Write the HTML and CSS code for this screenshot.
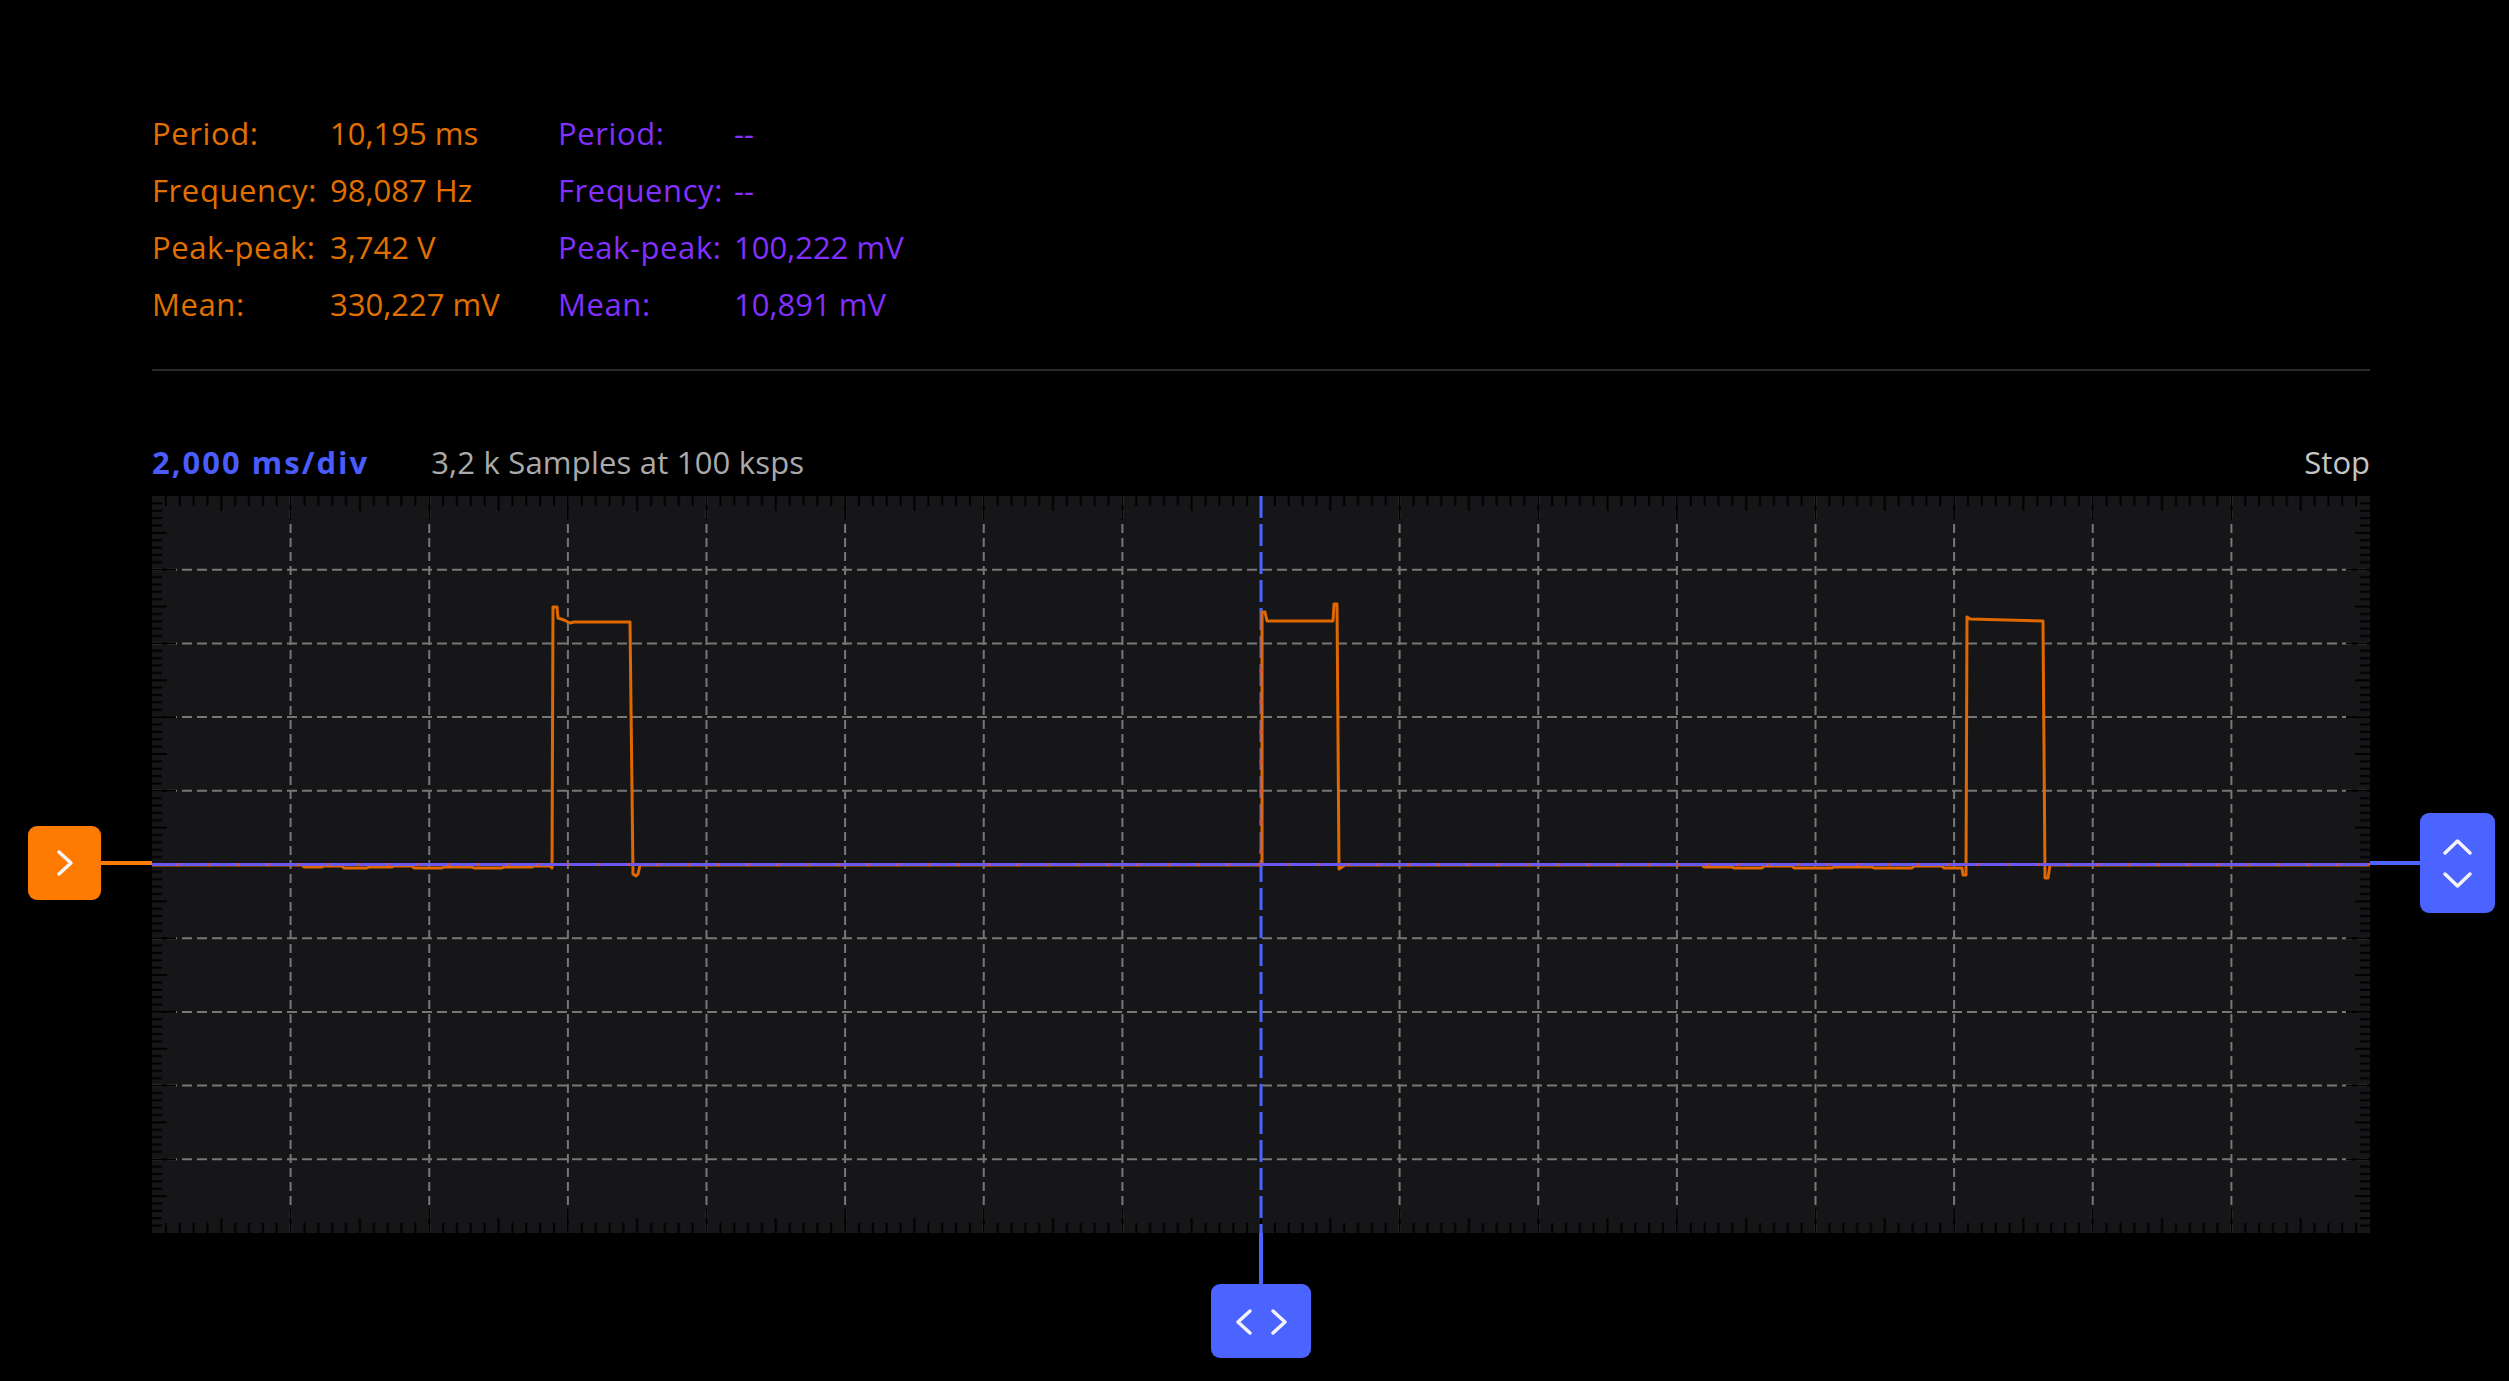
FILE: index.html
```html
<!DOCTYPE html>
<html lang="en">
<head>
<meta charset="utf-8">
<title>Scope</title>
<link rel="stylesheet" href="styles.css">
</head>
<body>
<div class="page">
  <div class="measures">
    <span class="lbl ch1">Period:</span><span class="ch1">10,195 ms</span><span class="lbl ch2">Period:</span><span class="ch2">--</span>
    <span class="lbl ch1">Frequency:</span><span class="ch1">98,087 Hz</span><span class="lbl ch2">Frequency:</span><span class="ch2">--</span>
    <span class="lbl ch1">Peak-peak:</span><span class="ch1">3,742 V</span><span class="lbl ch2">Peak-peak:</span><span class="ch2">100,222 mV</span>
    <span class="lbl ch1">Mean:</span><span class="ch1">330,227 mV</span><span class="lbl ch2">Mean:</span><span class="ch2">10,891 mV</span>
  </div>
  <div class="sep"></div>
  <div class="header">
    <div class="header-left">
      <span class="timediv">2,000 ms/div</span>
      <span class="samples">3,2 k Samples at 100 ksps</span>
    </div>
    <span class="state">Stop</span>
  </div>
  <div class="scope">
    <svg class="plot" width="2218" height="737" viewBox="0 0 2218 737">
      <defs>
        <pattern id="tt" patternUnits="userSpaceOnUse" x="-1" y="0" width="138.625" height="30">
          <rect x="0" y="0" width="2" height="24"/>
          <rect x="13.86" y="0" width="2" height="10"/>
          <rect x="27.73" y="0" width="2" height="10"/>
          <rect x="41.59" y="0" width="2" height="10"/>
          <rect x="55.45" y="0" width="2" height="10"/>
          <rect x="69.31" y="0" width="2" height="15"/>
          <rect x="83.18" y="0" width="2" height="10"/>
          <rect x="97.04" y="0" width="2" height="10"/>
          <rect x="110.9" y="0" width="2" height="10"/>
          <rect x="124.76" y="0" width="2" height="10"/>
        </pattern>
        <pattern id="tb" patternUnits="userSpaceOnUse" x="-1" y="707" width="138.625" height="30">
          <rect x="0" y="6" width="2" height="24"/>
          <rect x="13.86" y="20" width="2" height="10"/>
          <rect x="27.73" y="20" width="2" height="10"/>
          <rect x="41.59" y="20" width="2" height="10"/>
          <rect x="55.45" y="20" width="2" height="10"/>
          <rect x="69.31" y="15" width="2" height="15"/>
          <rect x="83.18" y="20" width="2" height="10"/>
          <rect x="97.04" y="20" width="2" height="10"/>
          <rect x="110.9" y="20" width="2" height="10"/>
          <rect x="124.76" y="20" width="2" height="10"/>
        </pattern>
        <pattern id="tl" patternUnits="userSpaceOnUse" x="0" y="-1" width="30" height="73.7">
          <rect x="0" y="0" width="24" height="2"/>
          <rect x="0" y="7.37" width="10" height="2"/>
          <rect x="0" y="14.74" width="10" height="2"/>
          <rect x="0" y="22.11" width="10" height="2"/>
          <rect x="0" y="29.48" width="10" height="2"/>
          <rect x="0" y="36.85" width="15" height="2"/>
          <rect x="0" y="44.22" width="10" height="2"/>
          <rect x="0" y="51.59" width="10" height="2"/>
          <rect x="0" y="58.96" width="10" height="2"/>
          <rect x="0" y="66.33" width="10" height="2"/>
        </pattern>
        <pattern id="tr" patternUnits="userSpaceOnUse" x="2188" y="-1" width="30" height="73.7">
          <rect x="6" y="0" width="24" height="2"/>
          <rect x="20" y="7.37" width="10" height="2"/>
          <rect x="20" y="14.74" width="10" height="2"/>
          <rect x="20" y="22.11" width="10" height="2"/>
          <rect x="20" y="29.48" width="10" height="2"/>
          <rect x="15" y="36.85" width="15" height="2"/>
          <rect x="20" y="44.22" width="10" height="2"/>
          <rect x="20" y="51.59" width="10" height="2"/>
          <rect x="20" y="58.96" width="10" height="2"/>
          <rect x="20" y="66.33" width="10" height="2"/>
        </pattern>
      </defs>
      <rect class="plot-bg" x="0" y="0" width="2218" height="737"/>
      <g class="grid">
        <line x1="0" y1="73.7" x2="2218" y2="73.7"/>
        <line x1="0" y1="147.4" x2="2218" y2="147.4"/>
        <line x1="0" y1="221.1" x2="2218" y2="221.1"/>
        <line x1="0" y1="294.8" x2="2218" y2="294.8"/>
        <line x1="0" y1="442.2" x2="2218" y2="442.2"/>
        <line x1="0" y1="515.9" x2="2218" y2="515.9"/>
        <line x1="0" y1="589.6" x2="2218" y2="589.6"/>
        <line x1="0" y1="663.3" x2="2218" y2="663.3"/>
      </g>
      <g class="grid grid-v">
        <line x1="138.6" y1="0" x2="138.6" y2="737"/>
        <line x1="277.25" y1="0" x2="277.25" y2="737"/>
        <line x1="415.9" y1="0" x2="415.9" y2="737"/>
        <line x1="554.5" y1="0" x2="554.5" y2="737"/>
        <line x1="693.1" y1="0" x2="693.1" y2="737"/>
        <line x1="831.75" y1="0" x2="831.75" y2="737"/>
        <line x1="970.4" y1="0" x2="970.4" y2="737"/>
        <line x1="1247.6" y1="0" x2="1247.6" y2="737"/>
        <line x1="1386.25" y1="0" x2="1386.25" y2="737"/>
        <line x1="1524.9" y1="0" x2="1524.9" y2="737"/>
        <line x1="1663.5" y1="0" x2="1663.5" y2="737"/>
        <line x1="1802.1" y1="0" x2="1802.1" y2="737"/>
        <line x1="1940.75" y1="0" x2="1940.75" y2="737"/>
        <line x1="2079.4" y1="0" x2="2079.4" y2="737"/>
      </g>
      <g class="ticks">
        <rect x="3" y="0" width="2212" height="30" fill="url(#tt)"/>
        <rect x="3" y="707" width="2212" height="30" fill="url(#tb)"/>
        <rect x="0" y="3" width="30" height="731" fill="url(#tl)"/>
        <rect x="2188" y="3" width="30" height="731" fill="url(#tr)"/>
      </g>
      <line class="tpos" x1="1109" y1="0" x2="1109" y2="737"/>
      <path class="trace1" d="M0,369 H150 L152,371 L170,371 L172,370 L190,370 L192,372 L215,372 L217,371 L240,371 L242,370 L260,370 L262,372 L290,372 L292,371 L320,371 L322,372 L350,372 L352,371 L380,371 L382,370 L398,370 L400,372 L401,111 L405,111 L406,122 L412,124 L418,127 L422,126 L478,126 L481,378 L484,380 L486,378 L488,369 L1107,369 L1110,369 L1110,116 L1113,116 L1115,125 L1181,125 L1182,108 L1185,108 L1187,373 L1190,371 L1193,369 L1550,369 L1552,371 L1580,371 L1582,372 L1610,372 L1612,370 L1640,370 L1642,372 L1680,372 L1682,371 L1720,371 L1722,372 L1760,372 L1762,370 L1790,370 L1792,372 L1810,372 L1811,379 L1814,379 L1815,121 L1818,123 L1891,125 L1893,382 L1896,382 L1898,369 H2218"/>
      <line class="trace2" x1="0" y1="368.5" x2="2218" y2="368.5"/>
      <line class="trig" x1="25" y1="368.5" x2="2218" y2="368.5"/>
      <line class="trig" x1="1109" y1="174" x2="1109" y2="368"/>
    </svg>

    <div class="marker marker-ch1">
      <div class="handle handle-orange">
        <svg width="73" height="74" viewBox="0 0 73 74"><polyline class="chev" points="31,26 43,37 31,48"/></svg>
      </div>
      <div class="link link-h link-orange"></div>
    </div>

    <div class="marker marker-ch2">
      <div class="link link-h link-blue"></div>
      <div class="handle handle-blue handle-tall">
        <svg width="75" height="100" viewBox="0 0 75 100"><polyline class="chev" points="25,40 37.5,28 50,40"/><polyline class="chev" points="25,61 37.5,73 50,61"/></svg>
      </div>
    </div>

    <div class="marker marker-time">
      <div class="link link-v link-blue"></div>
      <div class="handle handle-blue handle-wide">
        <svg width="100" height="74" viewBox="0 0 100 74"><polyline class="chev" points="39,27 27,38 39,49"/><polyline class="chev" points="62,27 74,38 62,49"/></svg>
      </div>
    </div>
  </div>
</div>
</body>
</html>
```
FILE: styles.css
```css
html, body {
  margin: 0;
  padding: 0;
  background: #000;
}

body {
  font-family: "Open Sans", "Noto Sans", "DejaVu Sans", sans-serif;
  width: 2509px;
  height: 1381px;
  overflow: hidden;
}

.page {
  width: 2218px;
  padding: 105px 0 0 152px;
}

.measures {
  display: grid;
  grid-template-columns: 178px 228px 176px auto;
  grid-auto-rows: 57px;
  font-size: 31px;
  line-height: 57px;
  white-space: nowrap;
}

.lbl { letter-spacing: 0.6px; }

.ch1 { color: #e27000; }
.ch2 { color: #8230ff; }

.sep {
  margin-top: 36px;
  height: 2px;
  background: #2a2a2a;
}

.header {
  margin-top: 71px;
  height: 40px;
  display: flex;
  align-items: center;
  justify-content: space-between;
  font-size: 31px;
  line-height: 40px;
}

.header-left {
  display: flex;
  align-items: center;
  gap: 62px;
}

.timediv {
  color: #4a5cff;
  font-weight: 700;
  letter-spacing: 2px;
}

.samples {
  color: #aaaaaa;
  letter-spacing: 0.2px;
}

.state {
  color: #c4c4c4;
}

.scope {
  margin-top: 14px;
  position: relative;
  width: 2218px;
  height: 737px;
}

.plot {
  display: block;
}

.plot-bg { fill: #161618; }

.grid line {
  stroke: #777777;
  stroke-width: 2;
  stroke-dasharray: 10 5;
}

.grid-v line {
  stroke-dasharray: 9 5;
}

.ticks { fill: #8e8e8e; }

.tpos {
  stroke: #4a63ff;
  stroke-width: 3;
  stroke-dasharray: 22 6;
}

.trace1 {
  fill: none;
  stroke: #e06800;
  stroke-width: 3;
  stroke-linejoin: round;
}

.trace2 {
  stroke: #6a57ee;
  stroke-width: 3;
}

.trig {
  stroke: #d9503a;
  stroke-width: 3;
  stroke-dasharray: 3 27;
}

.marker {
  position: absolute;
  display: flex;
  align-items: center;
}

.marker-ch1 { left: -124px; top: 330px; }
.marker-ch2 { left: 2218px; top: 317px; }
.marker-time { left: 1059px; top: 737px; flex-direction: column; }

.handle {
  width: 73px;
  height: 74px;
  border-radius: 9px;
  display: flex;
}

.handle svg { display: block; }

.handle-orange { background: #ff7a00; }
.handle-blue { background: #4b63ff; }
.handle-tall { width: 75px; height: 100px; }
.handle-wide { width: 100px; height: 74px; }

.chev {
  fill: none;
  stroke: #f4f4f8;
  stroke-width: 3.5;
  stroke-linecap: round;
  stroke-linejoin: round;
}

.link-h { width: 51px; height: 4px; }
.marker-ch2 .link-h { width: 50px; }
.link-v { width: 4px; height: 51px; }
.link-orange { background: #ff7a00; }
.link-blue { background: #4b63ff; }
```
